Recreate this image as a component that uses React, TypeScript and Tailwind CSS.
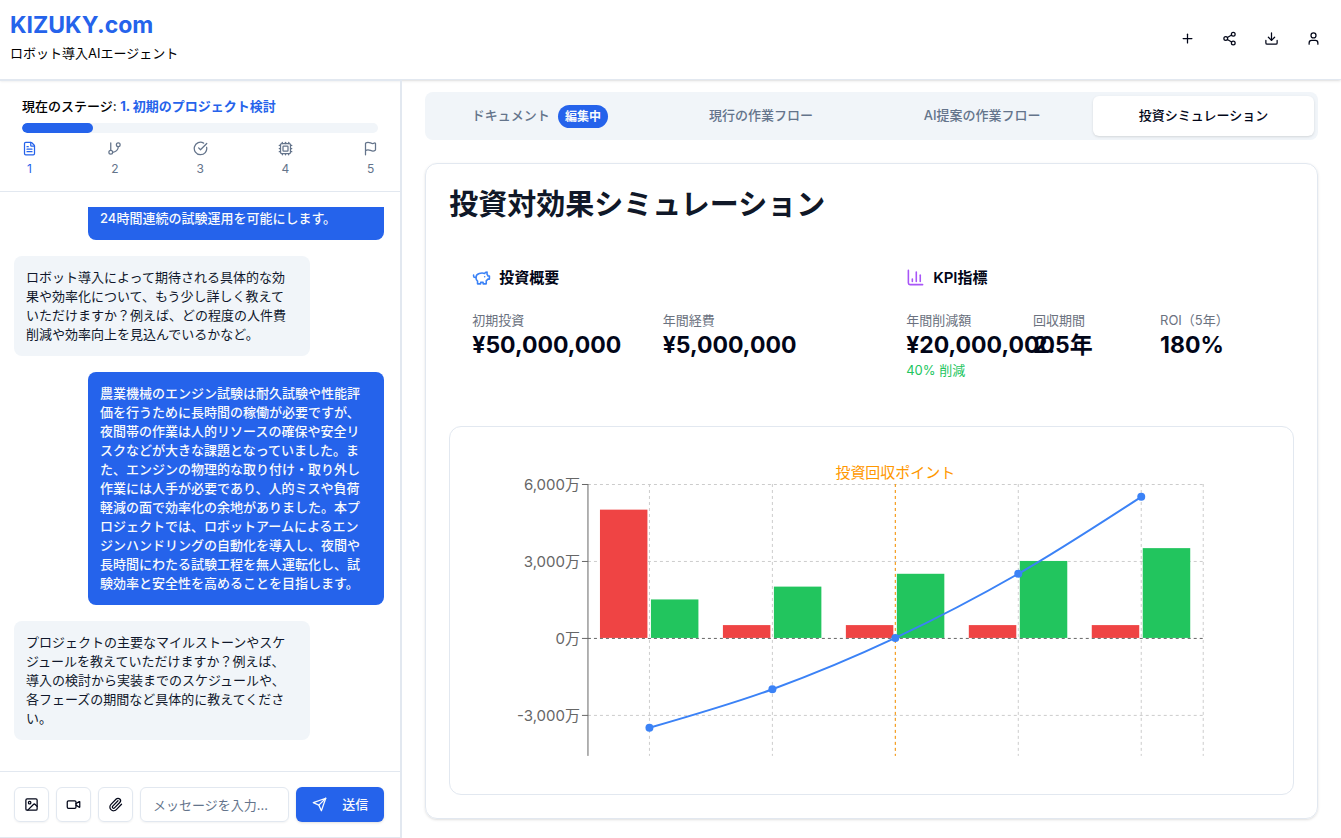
import { useState } from "react";
import {
  ChartColumn,
  CircleCheckBig,
  Cpu,
  Download,
  FileText,
  Flag,
  GitBranch,
  Image,
  Paperclip,
  Plus,
  Share2,
  User,
  Video,
} from "lucide-react";

const stages = [
  { id: 1, icon: FileText },
  { id: 2, icon: GitBranch },
  { id: 3, icon: CircleCheckBig },
  { id: 4, icon: Cpu },
  { id: 5, icon: Flag },
];

const messages = [
  { from: "user", text: "24時間連続の試験運用を可能にします。" },
  {
    from: "ai",
    text: "ロボット導入によって期待される具体的な効果や効率化について、もう少し詳しく教えていただけますか？例えば、どの程度の人件費削減や効率向上を見込んでいるかなど。",
  },
  {
    from: "user",
    text: "農業機械のエンジン試験は耐久試験や性能評価を行うために長時間の稼働が必要ですが、夜間帯の作業は人的リソースの確保や安全リスクなどが大きな課題となっていました。また、エンジンの物理的な取り付け・取り外し作業には人手が必要であり、人的ミスや負荷軽減の面で効率化の余地がありました。本プロジェクトでは、ロボットアームによるエンジンハンドリングの自動化を導入し、夜間や長時間にわたる試験工程を無人運転化し、試験効率と安全性を高めることを目指します。",
  },
  {
    from: "ai",
    text: "プロジェクトの主要なマイルストーンやスケジュールを教えていただけますか？例えば、導入の検討から実装までのスケジュールや、各フェーズの期間など具体的に教えてください。",
  },
];

const tabs = ["ドキュメント", "現行の作業フロー", "AI提案の作業フロー", "投資シミュレーション"];

// 単位: 万円
const years = [
  { cost: 5000, saving: 1500, total: -3500 },
  { cost: 500, saving: 2000, total: -2000 },
  { cost: 500, saving: 2500, total: 0 },
  { cost: 500, saving: 3000, total: 2500 },
  { cost: 500, saving: 3500, total: 5500 },
];

const plot = { left: 115, right: 730, top: 34, bottom: 306, zero: 188 };
const step = (plot.right - plot.left) / years.length;
const xAt = (i: number) => plot.left + step * (i + 0.5);
const yAt = (v: number) => plot.zero - (v * (plot.zero - plot.top)) / 6000;

// monotone cubic through the yearly totals
function linePath() {
  const t = years.map((d) => d.total);
  const last = t.length - 1;
  const slopes = t.map((v, i) => (i > 0 && i < last ? (t[i + 1] - t[i - 1]) / 2 : 0));
  slopes[0] = (3 * (t[1] - t[0]) - slopes[1]) / 2;
  slopes[last] = (3 * (t[last] - t[last - 1]) - slopes[last - 1]) / 2;
  let d = `M${xAt(0)},${yAt(t[0])}`;
  for (let i = 0; i < last; i++) {
    d += `C${xAt(i) + step / 3},${yAt(t[i] + slopes[i] / 3)} ${xAt(i + 1) - step / 3},${yAt(t[i + 1] - slopes[i + 1] / 3)} ${xAt(i + 1)},${yAt(t[i + 1])}`;
  }
  return d;
}

function Chart() {
  return (
    <svg viewBox="0 0 797 321" className="w-full" role="img" aria-label="投資回収ポイント">
      <g stroke="#ccc" strokeDasharray="3 3">
        {[6000, 3000, -3000].map((v) => (
          <line key={v} x1={plot.left} x2={plot.right} y1={yAt(v) + 0.5} y2={yAt(v) + 0.5} />
        ))}
        {years.map((_, i) => (
          <line key={i} x1={xAt(i)} x2={xAt(i)} y1={plot.top} y2={plot.bottom} />
        ))}
        <line x1={plot.right + 0.5} x2={plot.right + 0.5} y1={plot.top} y2={plot.bottom} />
      </g>
      <line x1={plot.left} x2={plot.left} y1={plot.top} y2={plot.bottom} stroke="#666" />
      {[6000, 3000, 0, -3000].map((v) => (
        <g key={v}>
          <line x1={plot.left - 6} x2={plot.left} y1={yAt(v) + 0.5} y2={yAt(v) + 0.5} stroke="#666" />
          <text x={plot.left - 8} y={yAt(v) + 6} textAnchor="end" fontSize="15" fill="#666">
            {v.toLocaleString("en-US")}万
          </text>
        </g>
      ))}
      {years.map((d, i) => (
        <g key={i}>
          <rect x={xAt(i) - 49.5} y={yAt(d.cost)} width="47.5" height={plot.zero - yAt(d.cost)} fill="#ef4444" />
          <rect x={xAt(i) + 1.5} y={yAt(d.saving)} width="47.5" height={plot.zero - yAt(d.saving)} fill="#22c55e" />
        </g>
      ))}
      <line x1={plot.left} x2={plot.right} y1={plot.zero + 0.5} y2={plot.zero + 0.5} stroke="#666" strokeDasharray="3 3" />
      <line x1={xAt(2)} x2={xAt(2)} y1={plot.top} y2={plot.bottom} stroke="#ff9800" strokeDasharray="3 3" />
      <text x={xAt(2)} y="28" textAnchor="middle" fontSize="15" fill="#ff9800">
        投資回収ポイント
      </text>
      <path d={linePath()} fill="none" stroke="#3b82f6" strokeWidth="2" />
      {years.map((d, i) => (
        <circle key={i} cx={xAt(i)} cy={yAt(d.total)} r="4" fill="#3b82f6" />
      ))}
    </svg>
  );
}

function SendIcon() {
  return (
    <svg viewBox="0 0 24 24" className="size-[15px]" fill="none" stroke="currentColor" strokeWidth="2" strokeLinecap="round" strokeLinejoin="round">
      <path d="m22 2-7 20-4-9-9-4Z" />
      <path d="M22 2 11 13" />
    </svg>
  );
}

function PiggyIcon() {
  return (
    <svg viewBox="0 0 24 24" className="size-[19px] text-[#3b82f6]" fill="none" stroke="currentColor" strokeWidth="2" strokeLinecap="round" strokeLinejoin="round">
      <path d="M19 5c-1.5 0-2.8 1.4-3 2-3.5-1.5-11-.3-11 5 0 1.8 0 3 2 4.5V20h4v-2h3v2h4v-4c1-.5 1.7-1 2-2h2v-4h-2c0-1-.5-1.5-1-2V5z" />
      <path d="M2 9v1c0 1.1.9 2 2 2h1" />
      <path d="M16 11h.01" />
    </svg>
  );
}

function Metric({ label, value, note }: { label: string; value: string; note?: string }) {
  return (
    <div className="min-w-0 whitespace-nowrap">
      <p className="text-[13px] leading-5 text-[#6b7280]">{label}</p>
      <p className="text-[23px] leading-[30px] font-bold">{value}</p>
      {note && <p className="text-[13px] leading-5 text-[#22c55e]">{note}</p>}
    </div>
  );
}

export default function App() {
  const [active, setActive] = useState(3);
  const [message, setMessage] = useState("");

  return (
    <div className="flex h-screen flex-col bg-white font-[Inter,'Noto_Sans_CJK_JP',sans-serif] text-[13px] text-slate-950">
      <header className="flex items-center justify-between border-b border-slate-200 px-[10px] pt-[10px] pb-3 shadow-sm">
        <div className="pb-1">
          <h1 className="text-[23px] leading-[30px] font-bold text-[#2563eb]">KIZUKY.com</h1>
          <p className="mt-1 text-[13px] leading-[19px] text-black">ロボット導入AIエージェント</p>
        </div>
        <div className="flex gap-[7px]">
          <button aria-label="新規作成" className="grid size-[35px] place-items-center">
            <Plus className="size-[15px]" />
          </button>
          <button aria-label="共有" className="grid size-[35px] place-items-center">
            <Share2 className="size-[15px]" />
          </button>
          <button aria-label="ダウンロード" className="grid size-[35px] place-items-center">
            <Download className="size-[15px]" />
          </button>
          <button aria-label="アカウント" className="grid size-[35px] place-items-center">
            <User className="size-[15px]" />
          </button>
        </div>
      </header>

      <div className="flex min-h-0 flex-1">
        <aside className="flex w-[30%] flex-col border-t border-r-2 border-b border-slate-200">
          <div className="border-b border-slate-200 px-[22px] pt-4 pb-[13px]">
            <p className="leading-[19px] font-medium text-black">
              現在のステージ: <span className="font-bold text-[#2563eb]">1. 初期のプロジェクト検討</span>
            </p>
            <div className="mt-[7px] h-[10px] overflow-hidden rounded-full bg-slate-100">
              <div className="h-full w-1/5 rounded-full bg-[#2563eb]" />
            </div>
            <ol className="mt-2 flex justify-between">
              {stages.map(({ id, icon: Icon }) => (
                <li key={id} className={`flex flex-col items-center gap-[3px] ${id === 1 ? "text-[#2563eb]" : "text-[#64748b]"}`}>
                  <Icon className="size-[15px]" />
                  <span className="text-xs leading-[19px]">{id}</span>
                </li>
              ))}
            </ol>
          </div>

          <div className="flex min-h-0 flex-1 flex-col py-[15px] pr-4 pl-[14px]">
            <div className="flex min-h-0 flex-1 flex-col justify-end overflow-hidden">
              {messages.map((m, i) => (
                <div
                  key={i}
                  className={`mb-4 w-4/5 shrink-0 rounded-lg py-3 pr-4 pl-3 leading-[19px] ${
                    m.from === "user" ? "self-end bg-[#2563eb] font-medium text-slate-50" : "bg-slate-100 text-slate-900"
                  }`}
                >
                  {m.text}
                </div>
              ))}
            </div>
          </div>

          <form className="flex gap-[7px] border-t border-slate-200 py-[15px] pr-4 pl-[14px]" onSubmit={(e) => e.preventDefault()}>
            <button type="button" aria-label="画像" className="grid size-[35px] shrink-0 place-items-center rounded-md border border-slate-200 shadow-xs">
              <Image className="size-[15px]" />
            </button>
            <button type="button" aria-label="動画" className="grid size-[35px] shrink-0 place-items-center rounded-md border border-slate-200 shadow-xs">
              <Video className="size-[15px]" />
            </button>
            <button type="button" aria-label="添付" className="grid size-[35px] shrink-0 place-items-center rounded-md border border-slate-200 shadow-xs">
              <Paperclip className="size-[15px]" />
            </button>
            <input
              value={message}
              onChange={(e) => setMessage(e.target.value)}
              aria-label="メッセージ"
              placeholder="メッセージを入力..."
              className="h-[35px] min-w-0 flex-1 rounded-md border border-slate-200 px-3 shadow-xs placeholder:text-[#64748b]"
            />
            <button className="flex h-[35px] shrink-0 items-center gap-[15px] rounded-md bg-[#2563eb] px-4 font-medium text-slate-50 shadow-sm">
              <SendIcon />
              送信
            </button>
          </form>
        </aside>

        <main className="min-w-0 flex-1 overflow-hidden px-[23px] pt-3">
          <div role="tablist" className="grid grid-cols-4 rounded-lg bg-slate-100 p-1">
            {tabs.map((tab, i) => (
              <button
                key={tab}
                role="tab"
                aria-selected={active === i}
                onClick={() => setActive(i)}
                className={`flex h-10 items-center justify-center gap-2 rounded-md font-medium ${
                  active === i ? "bg-white text-slate-950 shadow-sm" : "text-[#64748b]"
                }`}
              >
                {tab}
                {i === 0 && (
                  <span className="rounded-full bg-[#2563eb] px-[7px] text-xs leading-[23px] font-bold text-slate-50">編集中</span>
                )}
              </button>
            ))}
          </div>

          <section className="mt-[23px] rounded-xl border border-slate-200 p-[23px] shadow-sm">
            <h2 className="text-[29px] leading-[35px] font-bold text-gray-900">投資対効果シミュレーション</h2>
            <div className="mt-[23px] grid grid-cols-2 gap-[23px]">
              <div className="p-[23px]">
                <h3 className="flex items-center gap-2 text-[15px] leading-[19px] font-semibold">
                  <PiggyIcon />
                  投資概要
                </h3>
                <div className="mt-[23px] grid grid-cols-2 gap-4">
                  <Metric label="初期投資" value="¥50,000,000" />
                  <Metric label="年間経費" value="¥5,000,000" />
                </div>
              </div>
              <div className="p-[23px]">
                <h3 className="flex items-center gap-2 text-[15px] leading-[19px] font-semibold">
                  <ChartColumn className="size-[19px] text-[#a855f7]" />
                  KPI指標
                </h3>
                <div className="mt-[23px] grid grid-cols-3 gap-4">
                  <Metric label="年間削減額" value="¥20,000,000" note="40% 削減" />
                  <Metric label="回収期間" value="2.5年" />
                  <Metric label="ROI（5年）" value="180%" />
                </div>
              </div>
            </div>
            <div className="mt-[23px] rounded-xl border border-slate-200 p-[23px]">
              <Chart />
            </div>
          </section>
        </main>
      </div>
    </div>
  );
}
